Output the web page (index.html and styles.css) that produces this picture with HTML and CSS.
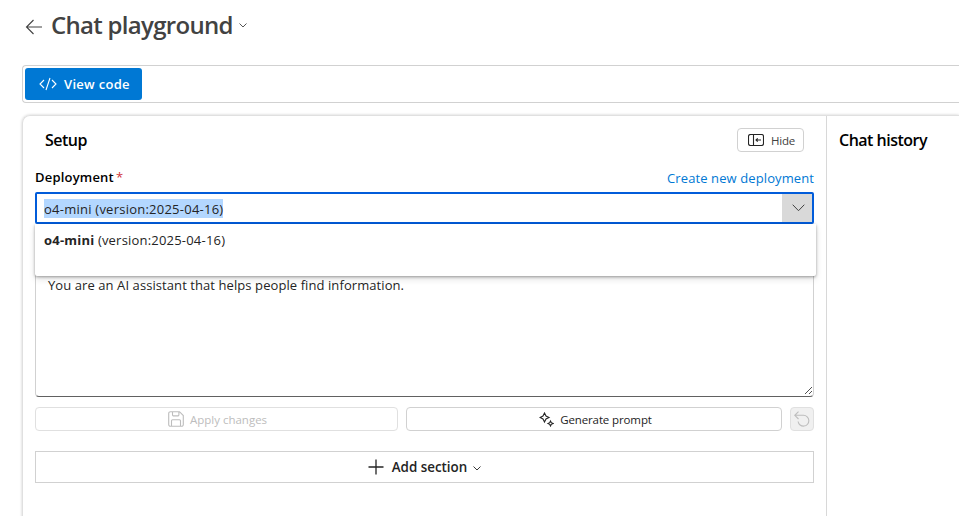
FILE: index.html
```html
<!DOCTYPE html>
<html lang="en">
<head>
<meta charset="utf-8">
<title>Chat playground</title>
<link rel="stylesheet" href="styles.css">
</head>
<body>
<header class="page-header">
  <svg class="back-icon" width="18" height="16" viewBox="0 0 18 16"><path d="M8.500 1 1.500 8l7 7M1.700 8H17"/></svg>
  <h1 class="page-title">Chat playground</h1>
  <svg class="title-chevron" width="8" height="5" viewBox="0 0 8 5"><path d="M.5.5 4 4 7.500.5"/></svg>
</header>
<div class="toolbar">
  <button class="view-code">
    <svg width="18" height="14" viewBox="0 0 18 14"><path d="M5 3 1 7l4 4M13 3l4 4-4 4M11 1 7 13"/></svg>
    <span class="view-code-text">View code</span>
  </button>
</div>
<main class="workspace">
  <section class="setup">
    <div class="setup-head">
      <h2 class="setup-title">Setup</h2>
      <button class="hide-button">
        <svg width="16" height="12" viewBox="0 0 16 12"><rect x=".5" y=".5" width="15" height="11" rx="2"/><path d="M5.500.5v11M8 6h5M9.700 4.300 8 6l1.700 1.700"/></svg>
        <span class="hide-text">Hide</span>
      </button>
    </div>
    <div class="field-head">
      <label class="field-label"><span class="field-name">Deployment</span><span class="required">*</span></label>
      <a class="create-link">Create new deployment</a>
    </div>
    <div class="combo">
      <div class="combo-value"><span class="selected-text">o4-mini (version:2025-04-16)</span></div>
      <div class="combo-toggle"><svg width="13" height="8" viewBox="0 0 13 8"><path d="M.7.7l5.800 6 5.800-6"/></svg></div>
      <div class="options"><div class="option"><b>o4-mini</b> (version:2025-04-16)</div></div>
    </div>
    <div class="prompt">
      <span class="prompt-text">You are an AI assistant that helps people find information.</span>
      <svg class="grip" width="9" height="9" viewBox="0 0 9 9"><path d="M1 8 8 1M5 8l3-3"/></svg>
    </div>
    <div class="actions">
      <button class="action apply">
        <svg width="16" height="16" viewBox="0 0 16 16"><path d="M2.500.7h9L15.300 4.500v9a1.800 1.800 0 0 1-1.800 1.800h-11A1.800 1.800 0 0 1 .7 13.500v-11A1.800 1.800 0 0 1 2.500.7zM4.500.7v3a1.200 1.200 0 0 0 1.200 1.200h4a1.200 1.200 0 0 0 1.200-1.200v-3M3.500 15V9.700a1 1 0 0 1 1-1h7a1 1 0 0 1 1 1V15"/></svg>
        <span class="apply-text">Apply changes</span>
      </button>
      <button class="action generate">
        <svg width="15" height="15" viewBox="0 0 15 15"><path d="M5.500 1 7 4l3 1.500L7 7l-1.500 3L4 7 1 5.500 4 4zM11.500 9l.8 1.700 1.700.8-1.700.8-.8 1.700-.8-1.700-1.700-.8 1.700-.8z"/></svg>
        <span class="generate-text">Generate prompt</span>
      </button>
      <button class="undo"><svg width="16" height="16" viewBox="0 0 16 16"><path d="M4.500.7.8 4.300 4.500 8M1 4.300h8.500a5.400 5.400 0 1 1-5.400 6.200"/></svg></button>
    </div>
    <button class="add-section">
      <svg width="16" height="16" viewBox="0 0 16 16"><path d="M8 .5v15M.5 8h15"/></svg>
      <span class="add-text">Add section</span>
      <svg class="add-chevron" width="8" height="5" viewBox="0 0 8 5"><path d="M.5.5 4 4 7.500.5"/></svg>
    </button>
  </section>
  <section class="history"><h2 class="history-title">Chat history</h2></section>
</main>
</body>
</html>
```
FILE: styles.css
```css
* { box-sizing: border-box; }
body {
  margin: 0;
  height: 516px;
  overflow: hidden;
  background: #fff;
  color: #242424;
  font: 14px/20px "Open Sans", "Noto Sans", sans-serif;
}
h1, h2 { margin: 0; }
button { margin: 0; padding: 0; font: inherit; color: inherit; background: #fff; }
svg { display: block; flex: none; fill: none; stroke: currentColor; stroke-width: 1.100; }
span, h1, h2, a, .option { white-space: nowrap; }

.page-header { display: flex; align-items: center; height: 52px; padding-left: 25px; color: #424242; }
.back-icon { margin-top: 2px; }
.page-title { width: 182px; margin: -2px 0 0 8px; font-size: 24px; line-height: 32px; font-weight: 600; letter-spacing: -.7px; }
.title-chevron { margin: -1px 0 0 6px; stroke-width: .9; }

.toolbar { height: 38px; margin: 13px 0 0 22px; padding: 2px; border: 1px solid #d1d1d1; border-right: 0; border-radius: 4px 0 0 4px; }
.view-code { display: flex; align-items: center; width: 117px; height: 32px; padding-left: 14px; gap: 7px; border: 0; border-radius: 3px; background: #0078d4; color: #fff; }
.view-code-text { font-size: 13px; font-weight: 600; letter-spacing: .3px; }

.workspace { display: flex; height: 420px; margin: 12px 0 0 22px; border: 1px solid #e0e0e0; border-right: 0; border-radius: 8px 0 0 0; box-shadow: 0 0 3px rgba(0,0,0,.2); }
.setup { width: 804px; padding: 12px 12px 0; border-right: 1px solid #d8d8d8; }
.setup-head { display: flex; justify-content: space-between; align-items: center; height: 24px; padding: 0 10px; }
.setup-title, .history-title { color: #000; font-size: 16px; line-height: 22px; font-weight: 600; letter-spacing: -.5px; }
.hide-button { display: flex; align-items: center; width: 67px; height: 24px; padding-left: 10px; gap: 7px; border: 1px solid #d1d1d1; border-radius: 4px; }
.hide-text { padding-top: 2px; font-size: 11.500px; letter-spacing: -.2px; color: #424242; }
.field-head { display: flex; justify-content: space-between; height: 40px; padding-top: 16px; }
.field-label { display: flex; gap: 2px; margin-top: -1px; color: #000; }
.field-name { font-size: 13px; font-weight: 600; letter-spacing: .2px; }
.required { color: #d13438; font-size: 13px; }
.create-link { color: #0078d4; font-size: 13px; letter-spacing: .1px; }

.combo { position: relative; display: flex; justify-content: space-between; height: 32px; border: 2px solid #015cda; border-radius: 2px; }
.combo-value { padding: 5px 0 0 7px; }
.selected-text { display: block; height: 19px; background: #b3d7ff; font-size: 13px; line-height: 20px; letter-spacing: .24px; }
.combo-toggle { display: flex; align-items: center; justify-content: center; width: 30px; padding-left: 2px; background: #d9d9d9; color: #424242; }
.combo-toggle svg { stroke-width: 1; }
.options { position: absolute; z-index: 1; left: -2px; top: 30px; width: 781px; height: 52px; padding: 6px 9px; border-radius: 0 0 2px 2px; background: #fff; box-shadow: 0 1px 3px rgba(0,0,0,.35), 0 3px 7px rgba(0,0,0,.12); }
.option { font-size: 13px; letter-spacing: .2px; }
.option b { font-weight: 700; }

.prompt { position: relative; height: 173px; padding: 51px 12px 0; border: 1px solid #d1d1d1; border-top: 0; border-bottom-color: #616161; border-radius: 0 0 4px 4px; }
.prompt-text { font-size: 13px; letter-spacing: .08px; }
.grip { position: absolute; right: 0; bottom: 1px; stroke-width: .8; }

.actions { display: flex; gap: 8px; height: 24px; margin-top: 10px; font-size: 11.500px; }
.action { display: flex; align-items: center; justify-content: center; gap: 6px; height: 24px; padding-left: 2px; border: 1px solid #d1d1d1; border-radius: 4px; }
.apply-text, .generate-text { padding-top: 2px; }
.generate-text { letter-spacing: -.12px; }
.apply { width: 363px; color: #bdbdbd; border-color: #e0e0e0; }
.generate { width: 376px; padding-left: 3px; }
.undo { display: flex; align-items: center; justify-content: center; width: 24px; border: 1px solid #e0e0e0; border-radius: 4px; background: #f0f0f0; color: #bdbdbd; }
.add-section { display: flex; align-items: center; justify-content: center; width: 779px; height: 32px; margin-top: 20px; border: 1px solid #d1d1d1; }
.add-section svg:first-child { stroke-width: 1.300; }
.add-text { margin-left: 8px; font-size: 13.400px; font-weight: 600; }
.add-chevron { margin: 3px 0 0 6px; stroke-width: .9; }
.history { padding: 13px 12px 0; }
```
